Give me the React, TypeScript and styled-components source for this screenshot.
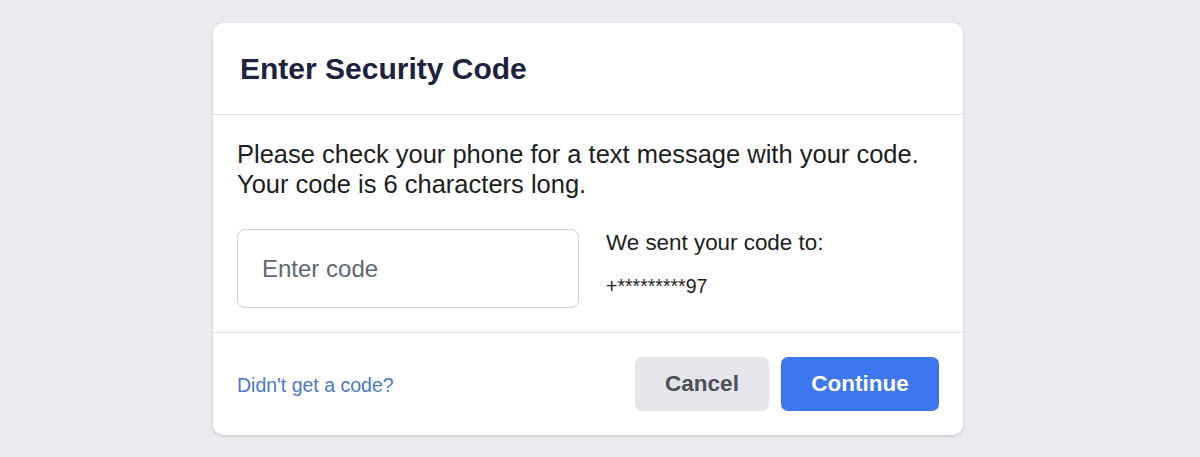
import React from 'react';
import styled, { createGlobalStyle } from 'styled-components';

const GlobalStyle = createGlobalStyle`
  html, body {
    margin: 0;
    padding: 0;
    background: #e9ebee;
    font-family: 'Liberation Sans', Arial, sans-serif;
  }
`;

const Page = styled.div`
  display: flex;
  justify-content: center;
  padding: 23px 24px 0 0;
  height: 457px;
  box-sizing: border-box;
`;

const Card = styled.div`
  width: 750px;
  height: 412px;
  background: #fff;
  border-radius: 10px;
  box-shadow: 0 1px 3px rgba(0, 0, 0, 0.18);
  display: flex;
  flex-direction: column;
  overflow: hidden;
`;

const Header = styled.div`
  height: 92px;
  box-sizing: border-box;
  display: flex;
  align-items: center;
  padding: 0 27px;
  border-bottom: 1px solid #dddfe2;
`;

const Title = styled.h2`
  margin: 0;
  font-size: 30px;
  font-weight: 700;
  color: #1c2340;
`;

const Body = styled.div`
  padding: 24px 24px 24px;
  border-bottom: 1px solid #dddfe2;
`;

const Message = styled.p`
  margin: 0 0 30px;
  font-size: 25.5px;
  line-height: 30px;
  color: #1c1e21;
`;

const CodeRow = styled.div`
  display: flex;
  gap: 27px;
`;

const CodeInput = styled.input`
  width: 342px;
  height: 79px;
  box-sizing: border-box;
  border: 1px solid #ccd0d5;
  border-radius: 8px;
  padding: 0 24px;
  font-family: inherit;
  font-size: 24px;
  color: #1c1e21;
  outline: none;
  &::placeholder {
    color: #606770;
  }
`;

const SentInfo = styled.div`
  display: flex;
  flex-direction: column;
  padding-top: 1px;
`;

const SentLabel = styled.div`
  font-size: 22.4px;
  line-height: 26px;
  color: #1c1e21;
`;

const Phone = styled.div`
  margin-top: 19px;
  font-size: 19.5px;
  line-height: 22px;
  color: #1c1e21;
`;

const Footer = styled.div`
  flex: 1;
  display: flex;
  align-items: center;
  justify-content: space-between;
  padding: 0 24px;
`;

const Link = styled.a`
  font-size: 19.5px;
  color: #4a76d6;
  text-decoration: none;
  margin-top: 3px;
`;

const Actions = styled.div`
  display: flex;
  gap: 12px;
`;

const Button = styled.button<{ $primary?: boolean }>`
  height: 54px;
  min-width: ${(p) => (p.$primary ? '158px' : '134px')};
  border: none;
  border-radius: 7px;
  font-family: inherit;
  font-size: 22.5px;
  font-weight: 700;
  background: ${(p) => (p.$primary ? '#3b77f1' : '#e4e6eb')};
  color: ${(p) => (p.$primary ? '#fff' : '#4b4f56')};
  cursor: pointer;
`;

export default function App() {
  return (
    <>
      <GlobalStyle />
      <Page>
        <Card>
          <Header>
            <Title>Enter Security Code</Title>
          </Header>
          <Body>
            <Message>
              Please check your phone for a text message with your code.
              <br />
              Your code is 6 characters long.
            </Message>
            <CodeRow>
              <CodeInput placeholder="Enter code" />
              <SentInfo>
                <SentLabel>We sent your code to:</SentLabel>
                <Phone>+*********97</Phone>
              </SentInfo>
            </CodeRow>
          </Body>
          <Footer>
            <Link href="#">Didn't get a code?</Link>
            <Actions>
              <Button>Cancel</Button>
              <Button $primary>Continue</Button>
            </Actions>
          </Footer>
        </Card>
      </Page>
    </>
  );
}
